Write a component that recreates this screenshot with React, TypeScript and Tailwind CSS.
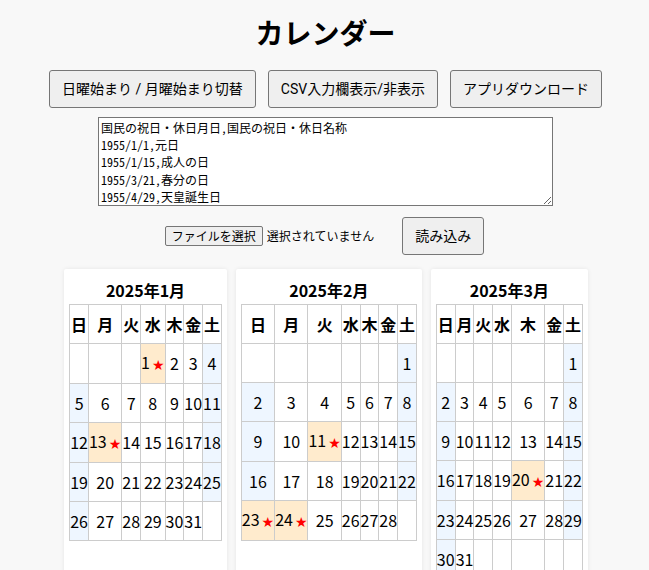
import React from "react";

const HOLIDAYS: Record<string, boolean> = {
  "1-1": true,
  "1-13": true,
  "2-11": true,
  "2-23": true,
  "2-24": true,
  "3-20": true,
};

const WEEK = ["日", "月", "火", "水", "木", "金", "土"];

function buildWeeks(year: number, month: number): (number | null)[][] {
  const first = new Date(year, month - 1, 1).getDay();
  const days = new Date(year, month, 0).getDate();
  const cells: (number | null)[] = [];
  for (let i = 0; i < first; i++) cells.push(null);
  for (let d = 1; d <= days; d++) cells.push(d);
  while (cells.length % 7 !== 0) cells.push(null);
  const weeks: (number | null)[][] = [];
  for (let i = 0; i < cells.length; i += 7) weeks.push(cells.slice(i, i + 7));
  return weeks;
}

function MonthCard({ year, month }: { year: number; month: number }) {
  const weeks = buildWeeks(year, month);
  return (
    <div className="bg-white px-[5px] pt-[10px] pb-[10px] rounded-[2px] shadow-[0_0_4px_rgba(0,0,0,0.08)]">
      <div className="text-center font-bold text-[16px] leading-[23px] mb-[2px]">
        {year}年{month}月
      </div>
      <table className="border-collapse text-[16px]">
        <thead>
          <tr>
            {WEEK.map((w) => (
              <th
                key={w}
                className="border border-[#cccccc] px-0 py-2 h-[39px] leading-[21px] font-bold text-center bg-white"
              >
                {w}
              </th>
            ))}
          </tr>
        </thead>
        <tbody>
          {weeks.map((wk, i) => (
            <tr key={i}>
              {wk.map((d, j) => {
                const holiday = d !== null && HOLIDAYS[`${month}-${d}`];
                const weekend = d !== null && (j === 0 || j === 6);
                const bg = holiday
                  ? "bg-[#ffebcd]"
                  : weekend
                  ? "bg-[#eef6ff]"
                  : "bg-white";
                return (
                  <td
                    key={j}
                    className={`border border-[#cccccc] px-0 py-2 h-[39px] leading-[21px] text-center whitespace-nowrap ${bg}`}
                  >
                    {d !== null ? d : ""}
                    {holiday ? (
                      <span className="ml-[2px] text-[14px] text-[#ff0000] font-['DejaVu_Sans'] relative top-[1px]">
                        ★
                      </span>
                    ) : null}
                  </td>
                );
              })}
            </tr>
          ))}
        </tbody>
      </table>
    </div>
  );
}

const CSV = `国民の祝日・休日月日,国民の祝日・休日名称
1955/1/1,元日
1955/1/15,成人の日
1955/3/21,春分の日
1955/4/29,天皇誕生日`;

const btn =
  "h-[38px] px-3 border border-[#767676] bg-[#efefef] rounded-[3px] text-[14px] text-black font-['Roboto','Noto_Sans_CJK_JP',sans-serif] whitespace-nowrap";

export default function App() {
  return (
    <div className="min-h-screen bg-[#f8f8f8] text-black font-['Noto_Sans_CJK_JP',sans-serif] pt-[12px]">
      <h1 className="text-center text-[28px] font-bold leading-[41px] pl-[2px]">カレンダー</h1>
      <div className="mt-[17px] flex justify-center gap-[12px] pl-[2px]">
        <button className={btn}>日曜始まり / 月曜始まり切替</button>
        <button className={btn}>CSV入力欄表示/非表示</button>
        <button className={btn}>アプリダウンロード</button>
      </div>
      <div className="mt-[9px] flex justify-center pl-[2px]">
        <textarea
          readOnly
          defaultValue={CSV}
          className="w-[455px] h-[89px] border border-[#767676] bg-white px-[2px] pt-[1px] pb-0 text-[12px] leading-[17.2px] overflow-hidden resize font-['Noto_Sans_Mono_CJK_JP','Noto_Sans_CJK_JP',monospace]"
        />
      </div>
      <div className="mt-[11px] flex justify-center items-center">
        <button className="h-[20px] px-[6px] border border-[#767676] bg-[#efefef] rounded-[2px] text-[12px] leading-[18px] font-['Noto_Sans_CJK_JP',sans-serif]">
          ファイルを選択
        </button>
        <span className="ml-[4px] text-[12px] font-['Noto_Sans_CJK_JP',sans-serif]">
          選択されていません
        </span>
        <button className={`${btn} ml-[28px] h-[37px]`}>読み込み</button>
      </div>
      <div className="mt-[14px] flex justify-center items-stretch gap-[9px] pl-[3px]">
        <MonthCard year={2025} month={1} />
        <MonthCard year={2025} month={2} />
        <MonthCard year={2025} month={3} />
      </div>
    </div>
  );
}
